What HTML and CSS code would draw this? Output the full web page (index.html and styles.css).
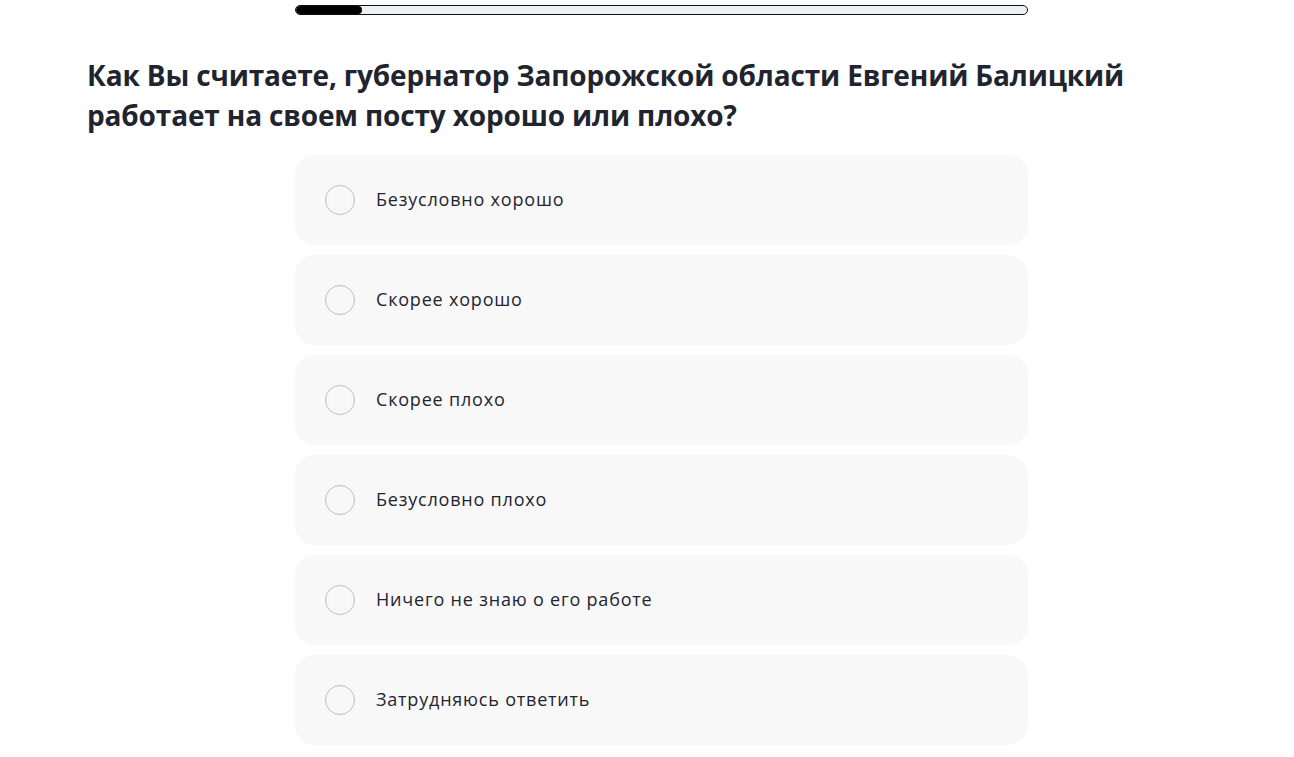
FILE: index.html
```html
<!DOCTYPE html>
<html lang="ru">
<head>
<meta charset="utf-8">
<link rel="stylesheet" href="styles.css">
</head>
<body>
<div class="progress"><div class="progress-fill" style="width: 9%"></div></div>
<h1 class="question">Как Вы считаете, губернатор Запорожской области Евгений Балицкий работает на своем посту хорошо или плохо?</h1>
<div class="options">
  <label class="option"><span class="radio"></span><span class="label">Безусловно хорошо</span></label>
  <label class="option"><span class="radio"></span><span class="label">Скорее хорошо</span></label>
  <label class="option"><span class="radio"></span><span class="label">Скорее плохо</span></label>
  <label class="option"><span class="radio"></span><span class="label">Безусловно плохо</span></label>
  <label class="option"><span class="radio"></span><span class="label">Ничего не знаю о его работе</span></label>
  <label class="option"><span class="radio"></span><span class="label">Затрудняюсь ответить</span></label>
</div>
</body>
</html>
```
FILE: styles.css
```css
html, body {
  margin: 0;
  padding: 0;
  background: #fff;
}
body {
  font-family: "Open Sans", "Noto Sans", sans-serif;
  color: #1f2430;
}
.progress {
  margin: 5px 0 0 295px;
  width: 733px;
  height: 10px;
  box-sizing: border-box;
  border: 1.5px solid #111;
  border-radius: 6px;
  background: #edf1f5;
  overflow: hidden;
}
.progress-fill {
  height: 100%;
  background: #000;
  border-radius: 6px;
}
.question {
  margin: 40px 0 0 87px;
  width: 1120px;
  font-size: 28px;
  line-height: 40px;
  font-weight: 700;
  letter-spacing: -0.15px;
  color: #20242e;
}
.options {
  margin: 20px 0 0 295px;
  width: 733px;
  display: flex;
  flex-direction: column;
  gap: 10px;
}
.option {
  height: 90px;
  box-sizing: border-box;
  background: #f8f8f8;
  border-radius: 20px;
  display: flex;
  align-items: center;
  padding-left: 30px;
  gap: 21px;
}
.radio {
  width: 30px;
  height: 30px;
  box-sizing: border-box;
  border: 1px solid #bdbdbd;
  border-radius: 50%;
}
.label {
  font-size: 18px;
  line-height: 24px;
  padding-bottom: 2px;
  letter-spacing: 0.8px;
  color: #1f2430;
}
```
